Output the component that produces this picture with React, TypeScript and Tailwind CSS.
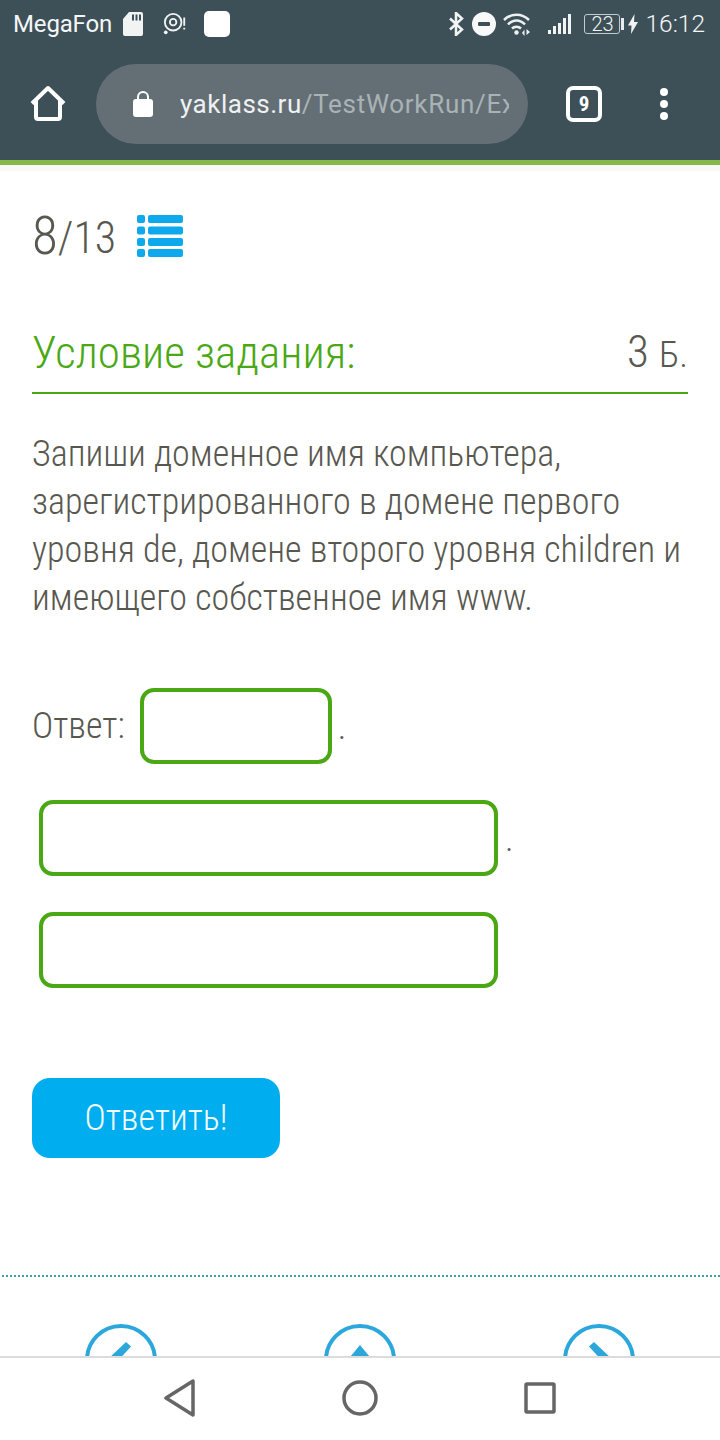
import React from "react";

const F = "[font-family:Roboto,'Noto_Sans',sans-serif]";

function StatusBar() {
  return (
    <div className="h-[48px] flex items-center pl-[13px] pr-[15px] text-white">
      <span className="text-[24px] leading-[48px] text-[#f4f6f6] w-[99px] tracking-[-0.15px] whitespace-nowrap">MegaFon</span>
      <svg width="22" height="26" viewBox="0 0 22 26" className="ml-[10px]">
        <path d="M7 1h12a2 2 0 0 1 2 2v20a2 2 0 0 1-2 2H3a2 2 0 0 1-2-2V8z" fill="#f2f4f4" />
        <path d="M10 3.500h2v6h-2zM13.500 3.500h2v6h-2zM17 3.500h2v6h-2z" fill="#3d5058" />
      </svg>
      <svg width="24" height="24" viewBox="0 0 26 26" className="ml-[19px]">
        <circle cx="11" cy="11" r="9" fill="none" stroke="#f2f4f4" strokeWidth="2" />
        <circle cx="11" cy="11" r="3.500" fill="none" stroke="#f2f4f4" strokeWidth="2" />
        <circle cx="3" cy="22" r="2" fill="#f2f4f4" />
        <path d="M22 6h2v9h-2zM22 17h2v2h-2z" fill="#f2f4f4" />
      </svg>
      <div className="ml-[17px] w-[26px] h-[26px] rounded-[5px] bg-white" />
      <svg width="16" height="24" viewBox="0 0 16 24" className="ml-auto" fill="none" stroke="#f2f4f4" strokeWidth="2.500">
        <path d="M2 6.500l12 11-6 5.500V1l6 5.500-12 11" />
      </svg>
      <svg width="24" height="24" viewBox="0 0 24 24" className="ml-[8px]">
        <circle cx="12" cy="12" r="12" fill="#f8f9f9" />
        <rect x="6" y="10" width="12" height="4" rx="1" fill="#3d5058" />
      </svg>
      <svg width="28" height="24" viewBox="0 0 28 24" className="ml-[7px]" fill="none" stroke="#eef1f1" strokeWidth="2.500">
        <path d="M1 8C8 1 19 1 26 8" />
        <path d="M5 12.500C10 7 17 7 22 12.500" />
        <path d="M9 16.500C11.500 14 15.500 14 18 16.500" />
        <circle cx="13.500" cy="20.500" r="2.200" fill="#eef1f1" stroke="none" />
        <path d="M19 21l2.500-3.500V24zM23.500 17v6l3.500-3z" fill="#eef1f1" stroke="none" />
      </svg>
      <svg width="24" height="22" viewBox="0 0 24 22" className="ml-[17px]" fill="#f2f4f4">
        <rect x="0" y="17" width="3" height="4" />
        <rect x="5" y="13" width="3" height="8" />
        <rect x="10" y="10" width="3" height="11" />
        <rect x="15" y="5" width="3" height="16" />
        <rect x="20" y="1" width="3" height="20" />
      </svg>
      <div className="ml-[12px] w-[36px] h-[20px] rounded-[3px] border border-[#c3cdd0] text-[20px] leading-[18px] text-center font-light text-[#f0f3f3]">23</div>
      <div className="ml-[1px] w-[3px] h-[12px] bg-[#e8ecec]" />
      <svg width="10" height="20" viewBox="0 0 10 20" className="ml-[4px]" fill="#f2f4f4">
        <path d="M6.500 0L0 11.500h3.500L3 20l7-12H6z" />
      </svg>
      <span className="ml-[7px] text-[24.500px] leading-[48px] font-light text-[#f4f6f6] whitespace-nowrap">16:12</span>
    </div>
  );
}

function Toolbar() {
  return (
    <div className="h-[112px] flex items-center">
      <svg width="38" height="38" viewBox="0 0 38 38" className="ml-[29px]" fill="none" stroke="#fff" strokeWidth="4" strokeLinejoin="round">
        <path d="M3 18.500L19 3l16 15.500M7 15v17a2 2 0 0 0 2 2h20a2 2 0 0 0 2-2V15" />
      </svg>
      <div className="ml-[29px] w-[432px] h-[80px] rounded-[40px] bg-[#646f75] flex items-center pl-[36px] pr-[19px]">
        <svg width="22" height="28" viewBox="0 0 22 28" className="shrink-0" fill="#fff">
          <rect x="1" y="9" width="20" height="18" rx="3" />
          <path d="M6 10V7a5 5 0 0 1 10 0v3" fill="none" stroke="#fff" strokeWidth="2" />
        </svg>
        <div className="ml-[26px] overflow-hidden whitespace-nowrap text-[26px] leading-[80px] tracking-[0.5px]">
          <span className="text-[#eef1f2]">yaklass.ru</span>
          <span className="text-[#a9b3b7] tracking-[0.7px]">/TestWorkRun/Ex</span>
        </div>
      </div>
      <div className="ml-[38px] w-[36px] h-[36px] rounded-[7px] border-[4px] border-white text-white font-bold text-[21px] leading-[28px] text-center font-stretch-condensed">9</div>
      <div className="ml-[58px] flex flex-col gap-[4px]">
        <div className="w-[8px] h-[8px] rounded-full bg-white" />
        <div className="w-[8px] h-[8px] rounded-full bg-white" />
        <div className="w-[8px] h-[8px] rounded-full bg-white" />
      </div>
    </div>
  );
}

function ListIcon() {
  return (
    <svg width="46" height="42" viewBox="0 0 46 42" fill="#0ea9ec" className="ml-[21px]">
      {[0, 11.5, 23, 34].map((y) => (
        <g key={y}>
          <rect x="0" y={y} width="8" height="8" rx="2" />
          <rect x="11" y={y} width="35" height="8" rx="2" />
        </g>
      ))}
    </svg>
  );
}

function Field({ w }: { w: string }) {
  return <div className={`${w} h-[76px] rounded-[14px] border-[4px] border-[#4aa814] bg-white`} />;
}

function NavCircle({ children }: { children: React.ReactNode }) {
  return (
    <svg width="72" height="72" viewBox="0 0 72 72" fill="none">
      <circle cx="36" cy="36" r="34" stroke="#2ba7dc" strokeWidth="4" />
      {children}
    </svg>
  );
}

export default function App() {
  return (
    <div className={`${F} w-[720px] h-[1440px] flex flex-col overflow-hidden bg-white`}>
      <div className="bg-[#3d5058] h-[160px] shrink-0">
        <StatusBar />
        <Toolbar />
      </div>
      <div className="h-[5px] bg-[#85b846] shrink-0" />
      <div className="h-[6px] bg-[#f8f9f5] shrink-0" />
      <main className="flex-1 overflow-hidden font-light text-[#585850] font-stretch-condensed">
        <div className="px-[32px]">
          <div className="h-[82px] mt-[24px] flex items-center">
            <span className="text-[53px] leading-[60px]">8</span>
            <span className="text-[44px] leading-[60px] mt-[3px]">/13</span>
            <ListIcon />
          </div>
          <div className="mt-[46px] h-[71px] pb-[9px] flex justify-between items-center border-b-[2px] border-[#4aa814]">
            <span className="text-[45px] text-[#4aa814] leading-[60px]">Условие задания:</span>
            <span className="text-[45px] leading-[60px]">3 <span className="text-[37px]">Б.</span></span>
          </div>
          <p className="mt-[36px] text-[36px] leading-[48px]">
            Запиши доменное имя компьютера,<br />зарегистрированного в домене первого<br />уровня de, домене второго уровня children и<br />имеющего собственное имя www.
          </p>
          <div className="mt-[66px] h-[76px] flex items-center text-[36px]">
            <span>Ответ:</span>
            <Field w="w-[192px] ml-[15px]" />
            <span className="ml-[6px] mt-[1px]">.</span>
          </div>
          <div className="mt-[36px] pl-[7px] h-[76px] flex items-center text-[36px]">
            <Field w="w-[459px]" />
            <span className="ml-[7px] mt-[1px]">.</span>
          </div>
          <div className="mt-[36px] pl-[7px]">
            <Field w="w-[459px]" />
          </div>
          <button className="mt-[90px] block w-[248px] h-[80px] rounded-[18px] bg-[#00aeef] text-[#f2fbff] text-[36px] font-light font-stretch-condensed">Ответить!</button>
        </div>
        <div className="mt-[117px] ml-[2px] border-t-[2px] border-dotted border-[#3fa0a8]" />
        <div className="mt-[47px] flex">
          <div className="ml-[85px]">
            <NavCircle><path d="M41 18l5 4.500L30 40 22 36z" fill="#2ba7dc" /></NavCircle>
          </div>
          <div className="ml-[167px]">
            <NavCircle><path d="M36 21l14 17H22z" fill="#2ba7dc" /></NavCircle>
          </div>
          <div className="ml-[167px]">
            <NavCircle><path d="M31 18l-5 4.500L42 40 50 36z" fill="#2ba7dc" /></NavCircle>
          </div>
        </div>
      </main>
      <nav className="h-[84px] pb-[3px] shrink-0 border-t-[2px] border-[#dcdcdc] bg-white flex items-center">
        <svg width="34" height="38" viewBox="0 0 34 38" className="ml-[163px]" fill="none" stroke="#666" strokeWidth="3.500" strokeLinejoin="round">
          <path d="M30 2v34L3 19z" />
        </svg>
        <svg width="36" height="36" viewBox="0 0 36 36" className="ml-[145px]" fill="none" stroke="#666" strokeWidth="3.500">
          <circle cx="18" cy="18" r="16" />
        </svg>
        <svg width="32" height="32" viewBox="0 0 32 32" className="ml-[146px]" fill="none" stroke="#666" strokeWidth="3.500" strokeLinejoin="round">
          <rect x="2" y="2" width="28" height="28" rx="1" />
        </svg>
      </nav>
    </div>
  );
}
